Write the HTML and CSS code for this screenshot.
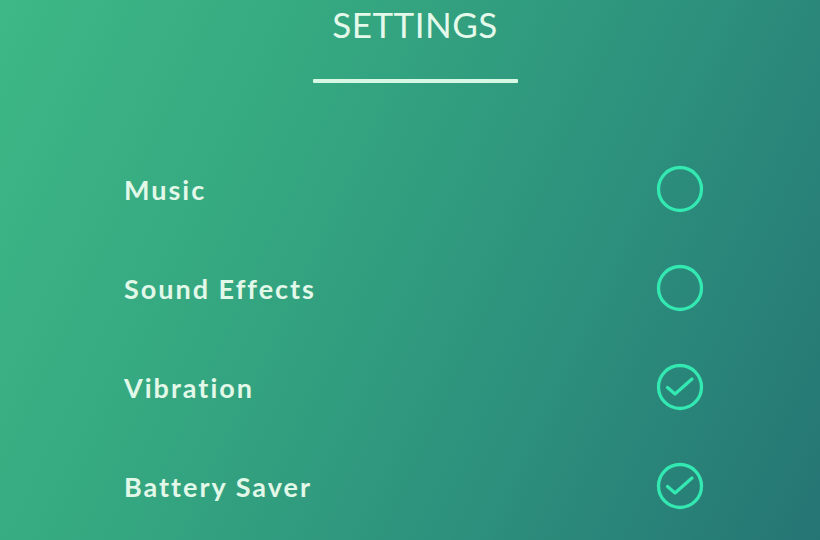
FILE: index.html
```html
<!DOCTYPE html>
<html>
<head>
<meta charset="utf-8">
<link rel="stylesheet" href="styles.css">
</head>
<body>
<div class="screen">
  <header class="header">
    <h1 class="title">SETTINGS</h1>
    <div class="rule"></div>
  </header>
  <ul class="list">
    <li class="row"><span class="label">Music</span>
      <svg class="check" viewBox="0 0 48 48"><circle cx="24" cy="24" r="21.5"/></svg></li>
    <li class="row"><span class="label">Sound Effects</span>
      <svg class="check" viewBox="0 0 48 48"><circle cx="24" cy="24" r="21.5"/></svg></li>
    <li class="row"><span class="label">Vibration</span>
      <svg class="check" viewBox="0 0 48 48"><circle cx="24" cy="24" r="21.5"/><path d="M11.5 24.5 L19 31 L36 16"/></svg></li>
    <li class="row"><span class="label">Battery Saver</span>
      <svg class="check" viewBox="0 0 48 48"><circle cx="24" cy="24" r="21.5"/><path d="M11.5 24.5 L19 31 L36 16"/></svg></li>
  </ul>
</div>
</body>
</html>
```
FILE: styles.css
```css
html, body {
  margin: 0;
  padding: 0;
}
body {
  width: 820px;
  height: 540px;
  overflow: hidden;
  font-family: Lato, "Open Sans", sans-serif;
}
.screen {
  width: 820px;
  height: 540px;
  background: linear-gradient(115deg, #3eb886 0%, #34a680 35%, #2d917d 65%, #257574 100%);
  display: flex;
  flex-direction: column;
}
.header {
  display: flex;
  flex-direction: column;
  align-items: center;
  padding-top: 2px;
  padding-left: 10px;
}
.title {
  margin: 0;
  font-size: 35px;
  font-weight: 400;
  color: #e4f9ea;
  letter-spacing: 0.5px;
  line-height: 44px;
}
.rule {
  width: 205px;
  height: 4px;
  background: #d6f7e4;
  margin-top: 33px;
  border-radius: 1px;
}
.list {
  list-style: none;
  margin: 0;
  padding: 0 116px 0 124px;
  margin-top: 83px;
  display: flex;
  flex-direction: column;
  gap: 53px;
}
.row {
  display: flex;
  align-items: center;
  justify-content: space-between;
  height: 46px;
}
.label {
  font-size: 27px;
  font-weight: 700;
  color: #e2f8e8;
  letter-spacing: 2px;
}
.check {
  width: 48px;
  height: 48px;
  fill: none;
  stroke: #33e8b1;
  stroke-width: 3.3;
  stroke-linecap: round;
  stroke-linejoin: round;
}
```
